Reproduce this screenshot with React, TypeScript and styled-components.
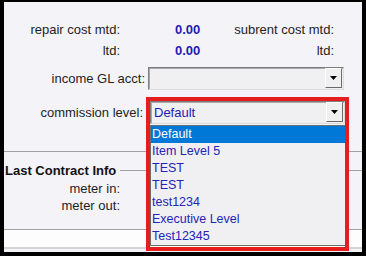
import { createGlobalStyle, styled } from 'styled-components'

const Global = createGlobalStyle`
    html, body {
        margin: 0;
        padding: 0;
        background: #000;
    }
    * {
        box-sizing: border-box;
    }
`

const Frame = styled.div`
    width: 358px;
    height: 250px;
    margin: 2px 0 0 4px;
    background: #f4f3f7;
    overflow: hidden;
    display: flex;
    flex-direction: column;
    font-family: "Liberation Sans", Arial, sans-serif;
    font-size: 13px;
    color: #1e1e1e;
`

const Section = styled.section<{ $h: number; $pt: number }>`
    height: ${p => p.$h}px;
    padding-top: ${p => p.$pt}px;
    display: flex;
    flex-direction: column;
    flex-shrink: 0;
`

const Row = styled.div<{ $h: number; $mt?: number }>`
    display: flex;
    align-items: center;
    height: ${p => p.$h}px;
    margin-top: ${p => p.$mt || 0}px;
`

const Label = styled.span<{ $w: number }>`
    width: ${p => p.$w}px;
    text-align: right;
    white-space: nowrap;
    flex-shrink: 0;
`

const Value = styled.span`
    margin-left: 55px;
    width: 40px;
    font-weight: 700;
    color: #1c1cb4;
`

const RightLabel = styled.span`
    flex: 1;
    text-align: right;
    padding-right: 28px;
    white-space: nowrap;
`

const SelectBox = styled.div<{ $ml: number; $w: number }>`
    margin-left: ${p => p.$ml}px;
    width: ${p => p.$w}px;
    height: 23px;
    display: flex;
    align-items: center;
    background: #f0eff2;
    border: 1px solid;
    border-color: #7d7d7d #dcdcdc #dcdcdc #7d7d7d;
    box-shadow: inset 1px 1px 0 #a9a9a9;
    padding: 0 1px 1px 3px;
    font-size: 13px;
    color: #1c1cb4;
`

const SelectText = styled.span`
    flex: 1;
`

const ArrowButton = styled.span`
    width: 17px;
    height: 20px;
    display: flex;
    align-items: center;
    justify-content: center;
    background: #f0f0f0;
    border: 1px solid;
    border-color: #ffffff #6a6a6a #6a6a6a #ffffff;
`

const Combo = styled.div`
    position: relative;
    display: flex;
    margin-left: 7px;
`

const Highlight = styled.div`
    position: absolute;
    left: -4px;
    top: -4px;
    width: 203px;
    height: 154px;
    border: 4px solid #e51d1d;
    pointer-events: none;
    z-index: 3;
`

const List = styled.ul`
    position: absolute;
    left: 0;
    top: 24px;
    width: 198px;
    margin: 0;
    padding: 0;
    list-style: none;
    background: #f0eff2;
    border: 1px solid #6e6e6e;
    z-index: 2;
`

const Item = styled.li<{ $selected?: boolean }>`
    height: 17px;
    line-height: 17px;
    padding-left: 1px;
    font-size: 12.5px;
    color: ${p => (p.$selected ? '#ffffff' : '#2424b8')};
    background: ${p => (p.$selected ? '#0078d7' : 'transparent')};
    white-space: nowrap;
`

const Divider = styled.div`
    height: 1px;
    flex-shrink: 0;
    background: #a0a0a0;
`

const GroupHeader = styled.div`
    display: flex;
    align-items: center;
    gap: 4px;
    height: 17px;
    margin-top: 10px;
    padding-left: 1px;
    font-weight: 700;
    color: #111;
    &::after {
        content: '';
        flex: 1;
        height: 1px;
        background: #a0a0a0;
    }
`

const Footer = styled.div`
    height: 19px;
    flex-shrink: 0;
    background: #fdfdfd;
    border-bottom: 2px solid #d4d4d6;
`

function Arrow() {
    return (
        <ArrowButton>
            <svg width="7" height="4" viewBox="0 0 7 4">
                <path d="M0 0h7L3.5 4z" fill="#000" />
            </svg>
        </ArrowButton>
    )
}

const levels = ['Default', 'Item Level 5', 'TEST', 'TEST', 'test1234', 'Executive Level', 'Test12345']

export default function App() {
    return (
        <>
            <Global />
            <Frame>
                <Section $h={149} $pt={17}>
                    <Row $h={21}>
                        <Label $w={116}>repair cost mtd:</Label>
                        <Value>0.00</Value>
                        <RightLabel>subrent cost mtd:</RightLabel>
                    </Row>
                    <Row $h={21}>
                        <Label $w={116}>ltd:</Label>
                        <Value>0.00</Value>
                        <RightLabel>ltd:</RightLabel>
                    </Row>
                    <Row $h={23} $mt={6}>
                        <Label $w={141}>income GL acct:</Label>
                        <SelectBox $ml={3} $w={196}>
                            <SelectText />
                            <Arrow />
                        </SelectBox>
                    </Row>
                    <Row $h={23} $mt={11}>
                        <Label $w={139}>commission level:</Label>
                        <Combo>
                            <SelectBox $ml={0} $w={195}>
                                <SelectText>Default</SelectText>
                                <Arrow />
                            </SelectBox>
                            <List>
                                {levels.map((l, i) => (
                                    <Item key={i} $selected={i === 0}>{l}</Item>
                                ))}
                            </List>
                            <Highlight />
                        </Combo>
                    </Row>
                </Section>
                <Divider />
                <Section $h={77} $pt={0}>
                    <GroupHeader>Last Contract Info</GroupHeader>
                    <Row $h={17} $mt={1}>
                        <Label $w={116}>meter in:</Label>
                    </Row>
                    <Row $h={17}>
                        <Label $w={116}>meter out:</Label>
                    </Row>
                </Section>
                <Divider />
                <Footer />
            </Frame>
        </>
    )
}
